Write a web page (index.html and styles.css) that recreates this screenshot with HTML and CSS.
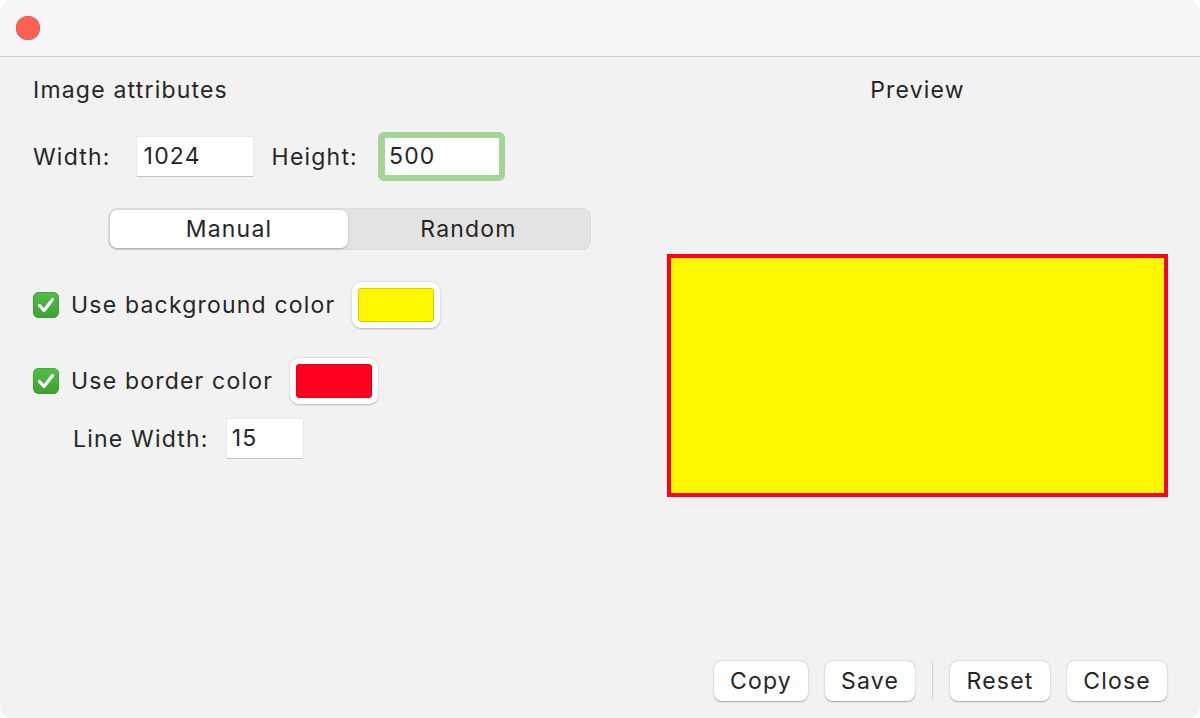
FILE: index.html
```html
<!DOCTYPE html>
<html>
<head>
<meta charset="utf-8">
<link rel="stylesheet" href="styles.css">
</head>
<body>
<div class="window">
  <div class="titlebar">
    <span class="light-close"></span>
  </div>
  <div class="content">
    <div class="left">
      <div class="heading">Image attributes</div>
      <div class="size-row">
        <span class="label">Width:</span>
        <span class="field w-field">1024</span>
        <span class="label h-label">Height:</span>
        <span class="focus-ring"><span class="field h-field">500</span></span>
      </div>
      <div class="segmented">
        <span class="seg seg-on">Manual</span>
        <span class="seg">Random</span>
      </div>
      <div class="check-row row-bg">
        <span class="checkbox"><svg viewBox="0 0 26 26" width="26" height="26"><path d="M6.5 13.5 L11 18.5 L19.5 7.5" fill="none" stroke="#fff" stroke-width="3.2" stroke-linecap="round" stroke-linejoin="round"/></svg></span>
        <span class="check-label">Use background color</span>
        <span class="well"><span class="swatch swatch-yellow"></span></span>
      </div>
      <div class="check-row row-border">
        <span class="checkbox"><svg viewBox="0 0 26 26" width="26" height="26"><path d="M6.5 13.5 L11 18.5 L19.5 7.5" fill="none" stroke="#fff" stroke-width="3.2" stroke-linecap="round" stroke-linejoin="round"/></svg></span>
        <span class="check-label">Use border color</span>
        <span class="well"><span class="swatch swatch-red"></span></span>
      </div>
      <div class="lw-row">
        <span class="label">Line Width:</span>
        <span class="field lw-field">15</span>
      </div>
    </div>
    <div class="right">
      <div class="preview-title">Preview</div>
      <div class="preview-box"></div>
    </div>
  </div>
  <div class="footer">
    <button class="btn btn-copy">Copy</button>
    <button class="btn btn-save">Save</button>
    <span class="sep"></span>
    <button class="btn btn-reset">Reset</button>
    <button class="btn btn-close">Close</button>
  </div>
</div>
</body>
</html>
```

FILE: styles.css
```css
html, body {
  margin: 0;
  padding: 0;
  background: #ffffff;
}
body {
  font-family: "Inter", "Helvetica Neue", "Liberation Sans", sans-serif;
  color: #262626;
  font-size: 23px;
  letter-spacing: 1.2px;
}
.window {
  width: 1200px;
  height: 718px;
  background: #f2f2f2;
  border-radius: 12px;
  overflow: hidden;
  display: flex;
  flex-direction: column;
  box-sizing: border-box;
}
.titlebar {
  height: 56px;
  background: #f6f6f6;
  border-bottom: 1px solid #d3d3d3;
  display: flex;
  align-items: center;
  padding-left: 16px;
  flex: none;
}
.light-close {
  width: 24px;
  height: 24px;
  border-radius: 50%;
  background: #fe5f57;
  box-shadow: inset 0 0 0 0.5px #e24b41;
}
.content {
  flex: 1;
  display: flex;
}
.left {
  width: 634px;
  padding-left: 33px;
  box-sizing: border-box;
}
.heading {
  height: 22px;
  line-height: 22px;
  margin-top: 22px;
}
.size-row {
  display: flex;
  align-items: center;
  margin-top: 31px;
  height: 49px;
}
.label {
  line-height: 26px;
}
.field {
  background: #fff;
  height: 39px;
  line-height: 39px;
  box-sizing: border-box;
  padding-left: 7px;
  box-shadow: 0 1px 0 #c4c4c4, 0 0 0 0.5px #dedede;
}
.w-field {
  width: 116px;
  margin-left: 26px;
}
.h-label {
  margin-left: 19px;
}
.focus-ring {
  margin-left: 20px;
  padding: 6px 6px 6px 7px;
  border-radius: 6px;
  background: #a5d49b;
  display: flex;
}
.h-field {
  width: 114px;
  height: 37px;
  line-height: 37px;
  padding-left: 4px;
  box-shadow: none;
  border-radius: 1px;
}
.segmented {
  margin-top: 27px;
  margin-left: 75px;
  width: 483px;
  height: 42px;
  background: #e3e3e3;
  border-radius: 9px;
  box-shadow: inset 0 0 0 1px #dadada;
  display: flex;
  padding: 2px;
  box-sizing: border-box;
}
.seg {
  flex: 1;
  text-align: center;
  line-height: 38px;
  border-radius: 7px;
}
.seg-on {
  flex: none;
  width: 238px;
  background: #fff;
  box-shadow: 0 1px 2px rgba(0,0,0,0.22), 0 0 0 0.5px rgba(0,0,0,0.08);
}
.check-row {
  display: flex;
  align-items: center;
  height: 46px;
}
.row-bg {
  margin-top: 32px;
}
.row-border {
  margin-top: 30px;
}
.checkbox {
  width: 26px;
  height: 26px;
  border-radius: 6px;
  background: linear-gradient(#55bc4a, #3da22f);
  box-shadow: inset 0 0 0 0.5px #37962a;
  display: flex;
  flex: none;
}
.check-label {
  margin-left: 12px;
}
.well {
  margin-left: 17px;
  width: 88px;
  height: 46px;
  background: #fff;
  border-radius: 9px;
  box-shadow: 0 0.5px 2px rgba(0,0,0,0.25);
  display: flex;
  padding: 6px;
  box-sizing: border-box;
}
.swatch {
  flex: 1;
  border-radius: 4px;
}
.swatch-yellow {
  background: #fff700;
  box-shadow: inset 0 0 0 1px #d6cf00;
}
.swatch-red {
  background: #ff001f;
  box-shadow: inset 0 0 0 1px #e0001b;
}
.lw-row {
  display: flex;
  align-items: center;
  margin-top: 15px;
  margin-left: 40px;
  height: 39px;
}
.lw-field {
  width: 76px;
  margin-left: 18px;
  padding-left: 5px;
}
.right {
  width: 501px;
  margin-left: 33px;
}
.preview-title {
  text-align: center;
  height: 22px;
  line-height: 22px;
  margin-top: 22px;
}
.preview-box {
  margin-top: 153px;
  width: 501px;
  height: 243px;
  box-sizing: border-box;
  border: 4px solid #ff0019;
  background: #fff700;
}
.footer {
  flex: none;
  height: 57px;
  display: flex;
  justify-content: flex-end;
  align-items: flex-start;
  padding-right: 33px;
}
.btn {
  font-family: inherit;
  font-size: 23px;
  letter-spacing: 1.2px;
  color: #262626;
  background: #fff;
  border: none;
  border-radius: 8px;
  height: 40px;
  padding: 0;
  box-shadow: 0 0.5px 1.5px rgba(0,0,0,0.3), 0 0 0 0.5px rgba(0,0,0,0.05);
  margin-left: 17px;
}
.btn-copy { width: 94px; margin-left: 0; }
.btn-save { width: 90px; }
.btn-reset { width: 100px; }
.btn-close { width: 100px; }
.sep {
  width: 1px;
  height: 39px;
  background: #d6d6d6;
  margin-left: 17px;
}
```
